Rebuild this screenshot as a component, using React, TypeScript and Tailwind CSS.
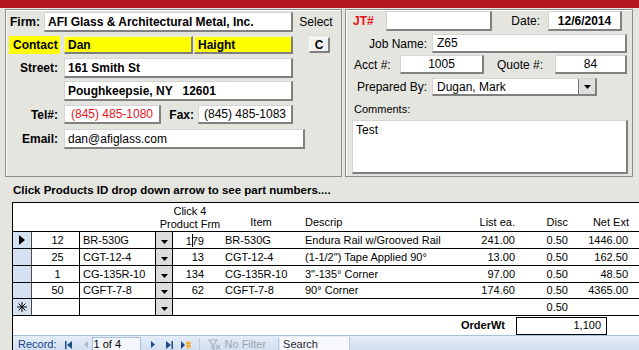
import React from "react";

const box =
  "bg-white border-t border-l border-t-[#d4d4d4] border-l-[#d4d4d4] border-r-2 border-b-2 border-r-[#808080] border-b-[#808080] flex items-center whitespace-nowrap overflow-hidden";
const yellowBox =
  "bg-[#ffff00] border-t border-l border-t-[#f4f4c0] border-l-[#f4f4c0] border-r-2 border-b-2 border-r-[#808080] border-b-[#808080] flex items-center whitespace-nowrap overflow-hidden";

const rows = [
  { qty: "12", id: "BR-530G", frm: "179", item: "BR-530G", desc: "Endura Rail w/Grooved Rail", list: "241.00", disc: "0.50", net: "1446.00" },
  { qty: "25", id: "CGT-12-4", frm: "13", item: "CGT-12-4", desc: "(1-1/2\") Tape Applied 90°", list: "13.00", disc: "0.50", net: "162.50" },
  { qty: "1", id: "CG-135R-10", frm: "134", item: "CG-135R-10", desc: "3\"-135° Corner", list: "97.00", disc: "0.50", net: "48.50" },
  { qty: "50", id: "CGFT-7-8", frm: "62", item: "CGFT-7-8", desc: "90° Corner", list: "174.60", disc: "0.50", net: "4365.00" },
];

function DropBtn() {
  return (
    <div className="w-[18px] h-full border-l border-r border-black bg-[#dcdcdc] flex items-end justify-center pb-[4px]">
      <svg width="7" height="4" viewBox="0 0 7 4">
        <path d="M0 0h7L3.5 4z" fill="#000" />
      </svg>
    </div>
  );
}

export default function App() {
  return (
    <div className="w-[639px] h-[350px] overflow-hidden bg-[#e5e5e0] text-black font-['Liberation_Sans',Arial,sans-serif] text-[12px] leading-none">
      <div className="h-[8px] bg-[#b3161c]" />

      {/* top panels */}
      <div className="flex mt-[1px]">
        {/* customer */}
        <div className="ml-[5px] w-[337px] h-[168px] border border-[#8c8c8c] shadow-[inset_1px_1px_0_#fff] flex flex-col">
          <div className="flex items-center mt-[2px] h-[20px]">
            <div className="w-[38px] text-right pr-[4px] font-bold">Firm:</div>
            <div className={`${box} w-[249px] h-[20px] pl-[3px] font-bold`}>AFI Glass &amp; Architectural Metal, Inc.</div>
            <div className="flex-1 text-center pr-[2px]">Select</div>
          </div>
          <div className="flex items-center mt-[4px] h-[18px]">
            <div className="ml-[3px] w-[51px] h-[18px] bg-[#ffff00] font-bold flex items-center pl-[4px]">Contact</div>
            <div className={`${yellowBox} ml-[4px] w-[129px] h-[18px] pl-[3px] font-bold`}>Dan</div>
            <div className={`${yellowBox} ml-[1px] w-[99px] h-[18px] pl-[3px] font-bold`}>Haight</div>
            <div className="ml-[16px] w-[21px] h-[16px] bg-[#f0f0f0] border-t border-l border-white border-r-2 border-b-2 border-r-[#808080] border-b-[#808080] font-bold flex items-center justify-center">
              C
            </div>
          </div>
          <div className="flex items-center mt-[4px] h-[20px]">
            <div className="w-[58px] text-right pr-[6px] font-bold">Street:</div>
            <div className={`${box} w-[229px] h-[20px] pl-[3px] font-bold`}>161 Smith St</div>
          </div>
          <div className="flex items-center mt-[3px] h-[20px]">
            <div className={`${box} ml-[58px] w-[229px] h-[20px] pl-[3px] font-bold whitespace-pre`}>Poughkeepsie, NY   12601</div>
          </div>
          <div className="flex items-center mt-[4px] h-[19px]">
            <div className="w-[58px] text-right pr-[6px] font-bold">Tel#:</div>
            <div className={`${box} w-[97px] h-[19px] justify-center text-[#e8141b]`}>(845) 485-1080</div>
            <div className="w-[37px] text-right pr-[4px] font-bold">Fax:</div>
            <div className={`${box} w-[95px] h-[19px] justify-center`}>(845) 485-1083</div>
          </div>
          <div className="flex items-center mt-[5px] h-[20px]">
            <div className="w-[58px] text-right pr-[6px] font-bold">Email:</div>
            <div className={`${box} w-[241px] h-[20px] pl-[3px]`}>dan@afiglass.com</div>
          </div>
        </div>

        {/* job */}
        <div className="ml-[3px] w-[288px] h-[168px] border border-[#8c8c8c] shadow-[inset_1px_1px_0_#fff] flex flex-col">
          <div className="flex items-center mt-[1px] h-[20px]">
            <div className="w-[40px] pl-[7px] font-bold text-[#e8141b]">JT#</div>
            <div className={`${box} w-[106px] h-[20px]`} />
            <div className="w-[56px] text-right pr-[8px]">Date:</div>
            <div className={`${box} w-[74px] h-[20px] justify-center font-bold`}>12/6/2014</div>
          </div>
          <div className="flex items-center mt-[3px] h-[19px]">
            <div className="w-[86px] text-right pr-[5px]">Job Name:</div>
            <div className={`${box} w-[195px] h-[19px] pl-[4px]`}>Z65</div>
          </div>
          <div className="flex items-center mt-[2px] h-[19px]">
            <div className="w-[54px] pl-[8px]">Acct #:</div>
            <div className={`${box} w-[84px] h-[19px] justify-center`}>1005</div>
            <div className="w-[71px] text-right pr-[12px]">Quote #:</div>
            <div className={`${box} w-[72px] h-[19px] justify-center`}>84</div>
          </div>
          <div className="flex items-center mt-[4px] h-[18px]">
            <div className="w-[86px] text-right pr-[5px]">Prepared By:</div>
            <div className={`${box} w-[165px] h-[18px]`}>
              <div className="flex-1 pl-[4px]">Dugan, Mark</div>
              <div className="w-[17px] h-full bg-[#dedede] border-l border-[#707070] flex items-center justify-center">
                <svg width="7" height="4" viewBox="0 0 7 4">
                  <path d="M0 0h7L3.5 4z" fill="#000" />
                </svg>
              </div>
            </div>
          </div>
          <div className="mt-[8px] h-[12px] pl-[8px] text-[11px]">Comments:</div>
          <div className={`${box} mt-[4px] ml-[6px] w-[276px] h-[54px] !items-start pl-[3px] pt-[3px]`}>Test</div>
        </div>
      </div>

      <div className="pl-[13px] mt-[6px] font-bold text-[11.5px] leading-[14px]">
        Click Products ID drop down arrow to see part numbers....
      </div>

      {/* subform */}
      <div className="ml-[12px] mt-[5px] border-l border-t border-black bg-white text-[11px]">
        <div className="flex h-[29px] border-b border-black items-end">
          <div className="w-[142px]" />
          <div className="w-[70px] text-center leading-[13px]">
            Click 4
            <br />
            Product Frm
          </div>
          <div className="w-[72px] text-center pb-[3px]">Item</div>
          <div className="w-[8px]" />
          <div className="w-[162px] pb-[3px]">Descrip</div>
          <div className="w-[50px] text-right pr-[2px] pb-[3px]">List ea.</div>
          <div className="w-[53px] text-right pr-[2px] pb-[3px]">Disc</div>
          <div className="w-[61px] text-right pr-[2px] pb-[3px]">Net Ext</div>
        </div>

        {rows.map((r, i) => (
          <div key={r.id} className={`flex border-b border-black items-center ${i === 3 ? "h-[16px]" : "h-[17px]"}`}>
            <div className="w-[19px] h-full bg-[#d5e1f1] border-r border-[#4a4a4a] flex items-center justify-center">
              {i === 0 && (
                <svg width="6" height="10" viewBox="0 0 6 10">
                  <path d="M0 0l6 5-6 5z" fill="#000" />
                </svg>
              )}
            </div>
            <div className="w-[48px] h-full border-r border-black flex items-center justify-center pl-[4px]">{r.qty}</div>
            <div className="w-[75px] pl-[3px] whitespace-nowrap">{r.id}</div>
            <DropBtn />
            <div className="w-[42px] text-right pr-[11px]">
              {i === 0 ? (
                <>
                  1<span className="inline-block w-px h-[13px] bg-black -mr-px align-[-2px]" />79
                </>
              ) : (
                r.frm
              )}
            </div>
            <div className="w-[90px] pl-[10px] whitespace-nowrap">{r.item}</div>
            <div className="w-[162px] whitespace-nowrap">{r.desc}</div>
            <div className="w-[50px] text-right pr-[2px]">{r.list}</div>
            <div className="w-[53px] text-right pr-[2px]">{r.disc}</div>
            <div className="w-[61px] text-right pr-[3px]">{r.net}</div>
          </div>
        ))}

        <div className="flex h-[17px] border-b border-black items-center">
          <div className="w-[19px] h-full bg-[#d5e1f1] border-r border-[#4a4a4a] flex items-center justify-center">
            <svg width="10" height="10" viewBox="0 0 10 10" stroke="#000" strokeWidth="1">
              <path d="M5 0v10M0 5h10M1.5 1.5l7 7M8.5 1.5l-7 7" />
            </svg>
          </div>
          <div className="w-[48px] h-full border-r border-black" />
          <div className="w-[75px]" />
          <DropBtn />
          <div className="w-[344px]" />
          <div className="w-[53px] text-right pr-[2px]">0.50</div>
        </div>

        <div className="flex h-[19px] items-center">
          <div className="w-[497px] text-right pr-[5px] font-bold">OrderWt</div>
          <div className="ml-[6px] w-[91px] h-[18px] border border-black flex items-center justify-end pr-[5px]">1,100</div>
        </div>

        {/* record navigation */}
        <div className="flex items-center h-[18px] border-t border-[#a9c0dc] bg-gradient-to-b from-[#e4edf8] to-[#cfdcee] text-[11px]">
          <div className="pl-[5px] text-[#15428b]">Record:</div>
          <svg className="ml-[8px]" width="7" height="8" viewBox="0 0 7 8" fill="#1e4b8a">
            <rect x="0" y="0" width="1.5" height="8" />
            <path d="M7 0v8L2 4z" />
          </svg>
          <svg className="ml-[12px]" width="4" height="7" viewBox="0 0 4 7" fill="#a9b8cc">
            <path d="M4 0v7L0 3.5z" />
          </svg>
          <div className="ml-[4px] w-[49px] h-[15px] bg-[#f3f7fc] border border-[#a9c0dc] flex items-center pl-[1px] text-black">1 of 4</div>
          <svg className="ml-[10px]" width="4" height="7" viewBox="0 0 4 7" fill="#1e4b8a">
            <path d="M0 0v7l4-3.5z" />
          </svg>
          <svg className="ml-[11px]" width="7" height="8" viewBox="0 0 7 8" fill="#1e4b8a">
            <path d="M0 0v8l5-4z" />
            <rect x="5.5" y="0" width="1.5" height="8" />
          </svg>
          <svg className="ml-[8px]" width="10" height="8" viewBox="0 0 10 8">
            <path d="M0 0v8l4-4z" fill="#1e4b8a" />
            <path d="M5 2h5M5 5h5M6.5 0.5v7M8.5 0.5v7" stroke="#f0b030" strokeWidth="1.4" />
          </svg>
          <div className="ml-[8px] w-px h-[14px] bg-[#b8cbe2]" />
          <svg className="ml-[8px]" width="13" height="11" viewBox="0 0 13 11" fill="none" stroke="#a9b3bf" strokeWidth="1.2">
            <path d="M1 1h8L6 5v5L4 9V5z" />
            <path d="M8 6l4 4M12 6l-4 4" />
          </svg>
          <div className="ml-[4px] text-[#9aa3ad]">No Filter</div>
          <div className="ml-[12px] w-px h-[14px] bg-[#b8cbe2]" />
          <div className="ml-[1px] w-[70px] h-[16px] bg-[#f6f8fb] border-r border-[#b8cbe2] flex items-center pl-[3px] text-[#1e2a3a]">Search</div>
        </div>
      </div>
    </div>
  );
}
